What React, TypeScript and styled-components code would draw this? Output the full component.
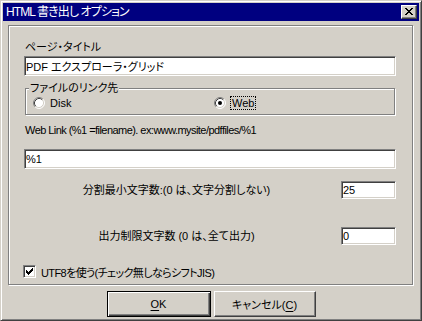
import React from "react";
import styled, { createGlobalStyle } from "styled-components";

const FONT = `"Liberation Sans", "Noto Sans CJK JP", sans-serif`;
const FACE = "#d4d0c8";

const Global = createGlobalStyle`
  html, body { margin: 0; padding: 0; background: ${FACE}; }
  #root { width: 422px; height: 321px; }
`;

const pixelPath = (rows: string[]) =>
  rows
    .flatMap((r, y) => r.split("").map((c, x) => (c === "X" ? `M${x} ${y}h1v1h-1z` : "")))
    .join("");

const CLOSE_X = ["XX....XX", ".XX..XX.", "..XXXX..", "...XX...", "..XXXX..", ".XX..XX.", "XX....XX"];
const CHECK = ["......X", ".....XX", "X...XXX", "XX.XXX.", "XXXXX..", ".XXX...", "..X...."];

const Window = styled.div`
  box-sizing: border-box;
  width: 422px;
  height: 321px;
  border: 1px solid;
  border-color: ${FACE} #404040 #404040 ${FACE};
  box-shadow: inset 1px 1px 0 #fff, inset -1px -1px 0 #808080;
  padding: 2px;
  background: ${FACE};
  display: flex;
  flex-direction: column;
  font-family: ${FONT};
  font-size: 11px;
  font-feature-settings: "palt";
  color: #000;
`;

const TitleBar = styled.div`
  height: 18px;
  flex: none;
  background: #000080;
  color: #fff;
  display: flex;
  align-items: center;
  justify-content: space-between;
  padding: 0 2px 0 3px;
`;

const TitleText = styled.span`
  font-size: 12px;
  line-height: 18px;
  letter-spacing: -0.9px;
  white-space: nowrap;
`;

const CloseButton = styled.div`
  box-sizing: border-box;
  width: 16px;
  height: 14px;
  background: ${FACE};
  border: 1px solid;
  border-color: #fff #404040 #404040 #fff;
  box-shadow: inset -1px -1px 0 #808080;
  display: flex;
  align-items: center;
  justify-content: center;
  padding: 0 1px 1px 0;
`;

const Frame = styled.div`
  box-sizing: border-box;
  height: 260px;
  margin: 4px 6px 0 5px;
  border: 1px solid #808080;
  box-shadow: inset 1px 1px 0 #fff, 1px 1px 0 #fff;
  padding: 15px 16px 0 15px;
  display: flex;
  flex-direction: column;
`;

const Label = styled.div<{ $mt?: number; $ml?: number; $tight?: boolean }>`
  line-height: 12px;
  height: 12px;
  white-space: nowrap;
  margin-top: ${(p) => p.$mt ?? 0}px;
  margin-left: ${(p) => p.$ml ?? 0}px;
  letter-spacing: ${(p) => (p.$tight ? "-0.55px" : "0")};
`;

const TextBox = styled.input<{ $h: number; $mt: number }>`
  box-sizing: border-box;
  display: block;
  width: 100%;
  height: ${(p) => p.$h}px;
  margin: ${(p) => p.$mt}px 0 0 0;
  padding: 0 1px;
  border: 1px solid;
  border-color: #808080 #fff #fff #808080;
  box-shadow: inset 1px 1px 0 #404040, inset -1px -1px 0 ${FACE};
  background: #fff;
  font-family: ${FONT};
  font-size: 11px;
  font-feature-settings: "palt";
  color: #000;
  outline: none;
`;

const Group = styled.div`
  position: relative;
  box-sizing: border-box;
  height: 27px;
  margin: 12px 1px 0 1px;
  border: 1px solid #808080;
  box-shadow: inset 1px 1px 0 #fff, 1px 1px 0 #fff;
  padding: 8px 0 5px 7px;
  display: grid;
  grid-template-columns: 181px auto;
  align-items: center;
`;

const Legend = styled.span`
  position: absolute;
  top: -7px;
  left: 3px;
  padding: 0 1px;
  line-height: 12px;
  background: ${FACE};
  white-space: nowrap;
`;

const Option = styled.label`
  display: flex;
  align-items: center;
  gap: 5px;
  height: 12px;
`;

const OptionText = styled.span<{ $focused?: boolean }>`
  line-height: 12px;
  padding: ${(p) => (p.$focused ? "0 1px" : "0")};
  outline: ${(p) => (p.$focused ? "1px dotted #000" : "none")};
`;

const FieldRow = styled.div<{ $mt: number }>`
  display: grid;
  grid-template-columns: 1fr 55px;
  column-gap: 12px;
  align-items: center;
  margin-top: ${(p) => p.$mt}px;
`;

const FieldLabel = styled.div`
  text-align: center;
  line-height: 12px;
  white-space: nowrap;
`;

const CheckRow = styled.label`
  display: flex;
  align-items: center;
  gap: 5px;
  height: 13px;
  margin: 20px 0 0 -1px;
  white-space: nowrap;
`;

const CheckText = styled.span`
  letter-spacing: -0.6px;
`;

const CheckBox = styled.span`
  box-sizing: border-box;
  width: 13px;
  height: 13px;
  flex: none;
  border: 1px solid;
  border-color: #808080 #fff #fff #808080;
  box-shadow: inset 1px 1px 0 #404040, inset -1px -1px 0 ${FACE};
  background: #fff;
  display: flex;
  align-items: center;
  justify-content: center;
`;

const ButtonRow = styled.div`
  display: flex;
  justify-content: center;
  gap: 3px;
  margin-top: 6px;
`;

const Button = styled.button<{ $default?: boolean }>`
  box-sizing: border-box;
  width: ${(p) => (p.$default ? 104 : 102)}px;
  height: 26px;
  padding: 0;
  background: ${FACE};
  font-family: ${FONT};
  font-size: 11px;
  font-feature-settings: "palt";
  color: #000;
  border: 1px solid;
  border-color: ${(p) => (p.$default ? "#000" : "#fff #404040 #404040 #fff")};
  box-shadow: ${(p) =>
    p.$default
      ? "inset 1px 1px 0 #fff, inset -1px -1px 0 #404040, inset -2px -2px 0 #808080"
      : `inset -1px -1px 0 #808080, inset 1px 1px 0 ${FACE}`};
  display: flex;
  align-items: center;
  justify-content: center;
  u { text-decoration: underline; text-underline-offset: 2px; }
`;

const Radio = ({ checked }: { checked?: boolean }) => (
  <svg width="12" height="12" viewBox="0 0 12 12" style={{ flex: "none" }}>
    <circle cx="6" cy="6" r="5" fill="#fff" />
    <path d="M2.11 9.89A5.5 5.5 0 0 1 9.89 2.11" stroke="#808080" fill="none" />
    <path d="M9.89 2.11A5.5 5.5 0 0 1 2.11 9.89" stroke="#fff" fill="none" />
    <path d="M2.82 9.18A4.5 4.5 0 0 1 9.18 2.82" stroke="#404040" fill="none" />
    <path d="M9.18 2.82A4.5 4.5 0 0 1 2.82 9.18" stroke={FACE} fill="none" />
    {checked && <circle cx="6" cy="6" r="2" fill="#000" />}
  </svg>
);

export default function App() {
  return (
    <>
      <Global />
      <Window>
        <TitleBar>
          <TitleText>HTML 書き出し オプション</TitleText>
          <CloseButton>
            <svg width="8" height="7" viewBox="0 0 8 7" shapeRendering="crispEdges">
              <path d={pixelPath(CLOSE_X)} fill="#000" />
            </svg>
          </CloseButton>
        </TitleBar>
        <Frame>
          <Label $ml={1}>ページ・タイトル</Label>
          <TextBox $h={20} $mt={3} defaultValue="PDF エクスプローラ・グリッド" />
          <Group>
            <Legend>ファイルのリンク先</Legend>
            <Option>
              <Radio />
              <OptionText>Disk</OptionText>
            </Option>
            <Option>
              <Radio checked />
              <OptionText $focused>Web</OptionText>
            </Option>
          </Group>
          <Label $mt={9} $ml={1} $tight>
            Web Link (%1 =filename). ex:www.mysite/pdffiles/%1
          </Label>
          <TextBox $h={20} $mt={13} defaultValue="%1" />
          <FieldRow $mt={12}>
            <FieldLabel>分割最小文字数:(0 は、文字分割しない)</FieldLabel>
            <TextBox $h={18} $mt={0} defaultValue="25" />
          </FieldRow>
          <FieldRow $mt={28}>
            <FieldLabel>出力制限文字数 (0 は、全て出力)</FieldLabel>
            <TextBox $h={18} $mt={0} defaultValue="0" />
          </FieldRow>
          <CheckRow>
            <CheckBox>
              <svg width="7" height="7" viewBox="0 0 7 7" shapeRendering="crispEdges">
                <path d={pixelPath(CHECK)} fill="#000" />
              </svg>
            </CheckBox>
            <CheckText>UTF8を使う(チェック無しならシフトJIS)</CheckText>
          </CheckRow>
        </Frame>
        <ButtonRow>
          <Button $default>
            <span>
              <u>O</u>K
            </span>
          </Button>
          <Button>
            <span>
              キャンセル(<u>C</u>)
            </span>
          </Button>
        </ButtonRow>
      </Window>
    </>
  );
}
